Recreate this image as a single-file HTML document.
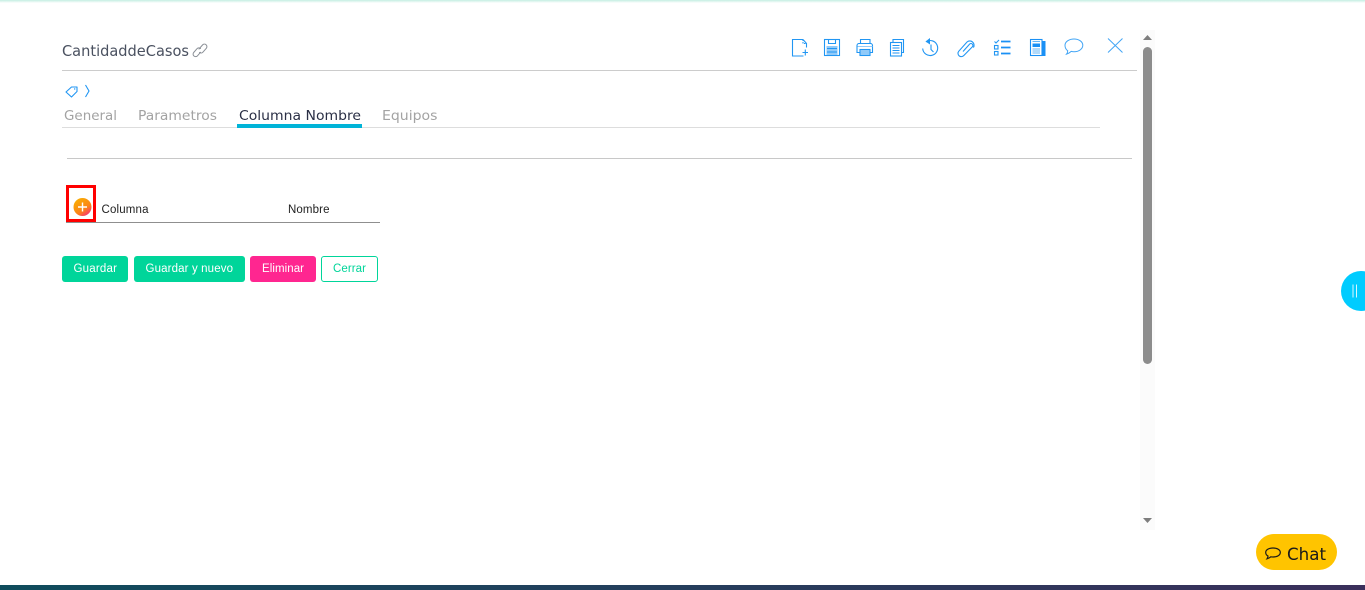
<!DOCTYPE html>
<html lang="es">
<head>
<meta charset="utf-8">
<title>CantidaddeCasos</title>
<style>
html,body{margin:0;padding:0;width:1365px;height:590px;overflow:hidden;background:#fff;}
svg{position:absolute;left:0;top:0;}
.t{font-family:"DejaVu Sans","Liberation Sans",sans-serif;}
.l{font-family:"Liberation Sans",sans-serif;}
.btn{font-family:"Liberation Sans",sans-serif;font-size:11.5px;fill:#fff;}
.ic{fill:none;stroke:#2196f3;stroke-width:1.1;}
</style>
</head>
<body>
<svg width="1365" height="590" viewBox="0 0 1365 590" xmlns="http://www.w3.org/2000/svg">
<defs>
<linearGradient id="bot" x1="0" x2="1" y1="0" y2="0"><stop offset="0" stop-color="#0f4c5c"/><stop offset="1" stop-color="#3b2f5b"/></linearGradient>
<linearGradient id="top" x1="0" x2="0" y1="0" y2="1"><stop offset="0" stop-color="#c4eee2"/><stop offset="1" stop-color="#ffffff"/></linearGradient>
<linearGradient id="plus" x1="0.2" x2="0.9" y1="0" y2="1"><stop offset="0" stop-color="#f9b000"/><stop offset=".6" stop-color="#fb8418"/><stop offset="1" stop-color="#f81f8a"/></linearGradient>
</defs>

<rect x="0" y="0" width="1365" height="3" fill="url(#top)"/>
<rect x="0" y="585" width="1365" height="5" fill="url(#bot)"/>

<!-- Title -->
<text class="t" x="62" y="56" font-size="15" fill="#4a5160" textLength="127" lengthAdjust="spacingAndGlyphs">CantidaddeCasos</text>
<g fill="none" stroke="#8a8f96" stroke-width="1" stroke-linecap="round">
<path d="M199 49l3.500-4a2.500 2.500 0 0 1 3.800 3.300l-3.300 3.800a2.500 2.500 0 0 1-3.500.3"/>
<path d="M200.500 48.500a2.500 2.500 0 0 0-3.500.2l-3.300 3.800a2.500 2.500 0 0 0 3.800 3.300l3-3.500"/>
</g>
<rect x="62" y="70" width="1075" height="1" fill="#cccccc"/>

<!-- Toolbar icons -->
<!-- new file -->
<g class="ic">
<path d="M803 39.500h-10.500v16.500h11"/>
<path d="M803 39.500l3.500 4v4"/>
<path d="M803 39.500v4h3.500" stroke-dasharray="1.500 1"/>
<path d="M802.500 52.500h5.500M805.300 49.500v6"/>
</g>
<!-- save -->
<g class="ic">
<rect x="824.500" y="39.500" width="15" height="16"/>
<path d="M828.500 39.500v4h7v-4"/>
</g>
<rect x="826.500" y="46" width="11" height="9" fill="#90caf9"/>
<path d="M827 48.500h10M827 52h10" stroke="#2196f3" stroke-width="1"/>
<!-- print -->
<g class="ic">
<path d="M860.500 44v-4.500h9.500v4.500"/>
<path d="M860 52.500h-3v-7a2 2 0 0 1 2-2h11.500a2 2 0 0 1 2 2v7h-3"/>
<rect x="860" y="49.500" width="10" height="6"/>
</g>
<rect x="860.500" y="50" width="9" height="5" fill="#90caf9"/>
<path d="M857.500 46.500h15" stroke="#90caf9" stroke-width="1"/>
<!-- copy -->
<g class="ic">
<path d="M893 42v-2.500h10.500v13h-2"/>
<rect x="890.500" y="42.500" width="11" height="13.500"/>
<path d="M892.500 45.500h7M892.500 48h7M892.500 50.500h7M892.500 53h7" stroke-width="1"/>
</g>
<!-- history -->
<g class="ic">
<path d="M926 41.800a7.500 7.500 0 1 1-3.300 6.700"/>
<path d="M931 44.500v5l2.500 2.500"/>
</g>
<path d="M925.500 41.500l4.500-3.500v6.500z" fill="#2196f3"/>
<!-- clip -->
<path class="ic" stroke-width="1" d="M963 51.500l6.500-7.300a1.900 1.900 0 0 1 2.900 2.500l-8.800 9a3.300 3.300 0 0 1-4.900-4.400l8.300-9.300a4.300 4.300 0 0 1 6.400 5.600"/>
<!-- checklist -->
<g class="ic">
<rect x="994.500" y="45.500" width="3.500" height="3.500"/>
<rect x="994.500" y="51.500" width="3.500" height="3.500"/>
<path d="M994.500 41.500l1.500 1.500 3-3"/>
</g>
<path d="M1001 41.500h9.500M1001 47.500h9.500M1001 53.500h9.500" stroke="#1a90f5" stroke-width="1.700" fill="none"/>
<!-- news -->
<rect x="1041" y="41" width="4.500" height="15" fill="#1a90f5"/>
<rect x="1030.500" y="39.500" width="11.500" height="16" fill="#fff" stroke="#1a90f5" stroke-width="1.100"/>
<rect x="1032.500" y="43.500" width="7.500" height="3.500" fill="#1a90f5"/>
<path d="M1032.500 41.500h7.500M1032.500 49h7.500M1032.500 51h7.500M1032.500 53h7.500" stroke="#64b5f6" stroke-width="1"/>
<!-- comment -->
<path d="M1074 39c5 0 8.800 2.800 8.800 6.300 0 3.600-3.800 6.400-8.800 6.400-1 0-2-.1-2.800-.3-1.300 1.200-3 2.300-4.700 2.800 .8-1 1.200-2.200 1.200-3.500-2-1.200-2.700-3.400-2.700-5.400 0-3.500 4-6.300 9-6.300z" fill="none" stroke="#42a5f5" stroke-width="1"/>
<!-- close -->
<path d="M1108 38.500l14.500 14M1122.500 38.500l-14.500 14" stroke="#42a5f5" stroke-width="1" fill="none"/>

<!-- Breadcrumb -->
<path d="M71.500 87h5.500v4.500l-5.500 5.500-5.500-5z" fill="none" stroke="#2196f3" stroke-width="1.100" stroke-linejoin="round"/>
<circle cx="74.700" cy="89" r=".7" fill="#2196f3"/>
<path d="M85.500 85l3.500 6-3.500 6" fill="none" stroke="#2196f3" stroke-width="1.100"/>

<!-- Tabs -->
<text class="t" x="64" y="120" font-size="13.500" fill="#a3a3a3" textLength="53" lengthAdjust="spacingAndGlyphs">General</text>
<text class="t" x="138" y="120" font-size="13.500" fill="#a3a3a3" textLength="79" lengthAdjust="spacingAndGlyphs">Parametros</text>
<text class="t" x="239" y="120" font-size="13.500" fill="#2a2f45" textLength="122" lengthAdjust="spacingAndGlyphs">Columna Nombre</text>
<text class="t" x="382" y="120" font-size="13.500" fill="#a3a3a3" textLength="55.500" lengthAdjust="spacingAndGlyphs">Equipos</text>
<rect x="62" y="127" width="1038" height="1" fill="#dddddd"/>
<rect x="237" y="124" width="125" height="4" fill="#00b4d8"/>

<rect x="67" y="158" width="1065" height="1" fill="#c8c8c8"/>

<!-- Table header -->
<rect x="66" y="222" width="314" height="1" fill="#8f8f8f"/>
<rect x="67.500" y="186.500" width="27" height="34" fill="none" stroke="#ff0000" stroke-width="3"/>
<circle cx="82.500" cy="207" r="9" fill="url(#plus)"/>
<path d="M78 207h9M82.500 202.500v9" stroke="#fff" stroke-width="1.400"/>
<text class="l" x="101.500" y="213" font-size="11.500" fill="#222" textLength="47" lengthAdjust="spacing">Columna</text>
<text class="l" x="288" y="213" font-size="11.500" fill="#222" textLength="41.500" lengthAdjust="spacing">Nombre</text>

<!-- Buttons -->
<rect x="62" y="256" width="66" height="26" rx="3" fill="#00d59a"/>
<text class="btn" x="73.500" y="272" textLength="43.500" lengthAdjust="spacing">Guardar</text>
<rect x="134" y="256" width="111" height="26" rx="3" fill="#00d59a"/>
<text class="btn" x="145.500" y="272" textLength="87.500" lengthAdjust="spacing">Guardar y nuevo</text>
<rect x="250" y="256" width="66" height="26" rx="3" fill="#ff2690"/>
<text class="btn" x="262" y="272" textLength="42" lengthAdjust="spacing">Eliminar</text>
<rect x="321.500" y="256.500" width="56" height="25" rx="2.500" fill="#fff" stroke="#00d59a"/>
<text class="btn" x="333" y="272" textLength="33" lengthAdjust="spacing" style="fill:#00d59a">Cerrar</text>

<!-- Scrollbar -->
<rect x="1140" y="30" width="15" height="500" fill="#fbfbfb"/>
<rect x="1143" y="47" width="9" height="317" rx="4.500" fill="#8c8c8c"/>
<path d="M1143 40l4.500-5 4.500 5z" fill="#7d7d7d"/>
<path d="M1143 518h9l-4.500 5z" fill="#7d7d7d"/>

<!-- Side handle -->
<circle cx="1361" cy="291" r="20" fill="#00ccff"/>
<path d="M1353 284.500v13M1356.500 284.500v13" stroke="#d8f6ff" stroke-width="1"/>

<!-- Chat -->
<rect x="1256" y="534" width="81" height="36" rx="18" fill="#ffc400"/>
<path d="M1273 548c4.300 0 7.300 1.900 7.300 4.500s-3 4.500-7.300 4.500c-.8 0-1.500-.1-2.200-.2-1.100 1-2.400 1.700-3.800 2 .6-.8 1-1.700 1-2.800-1.500-.8-2.300-2-2.300-3.500 0-2.600 3-4.500 7.300-4.500z" fill="none" stroke="#1a1a1a" stroke-width="1.200"/>
<text class="t" x="1287" y="560" font-size="16.500" fill="#1a1a1a" textLength="39" lengthAdjust="spacingAndGlyphs">Chat</text>
</svg>
</body>
</html>
